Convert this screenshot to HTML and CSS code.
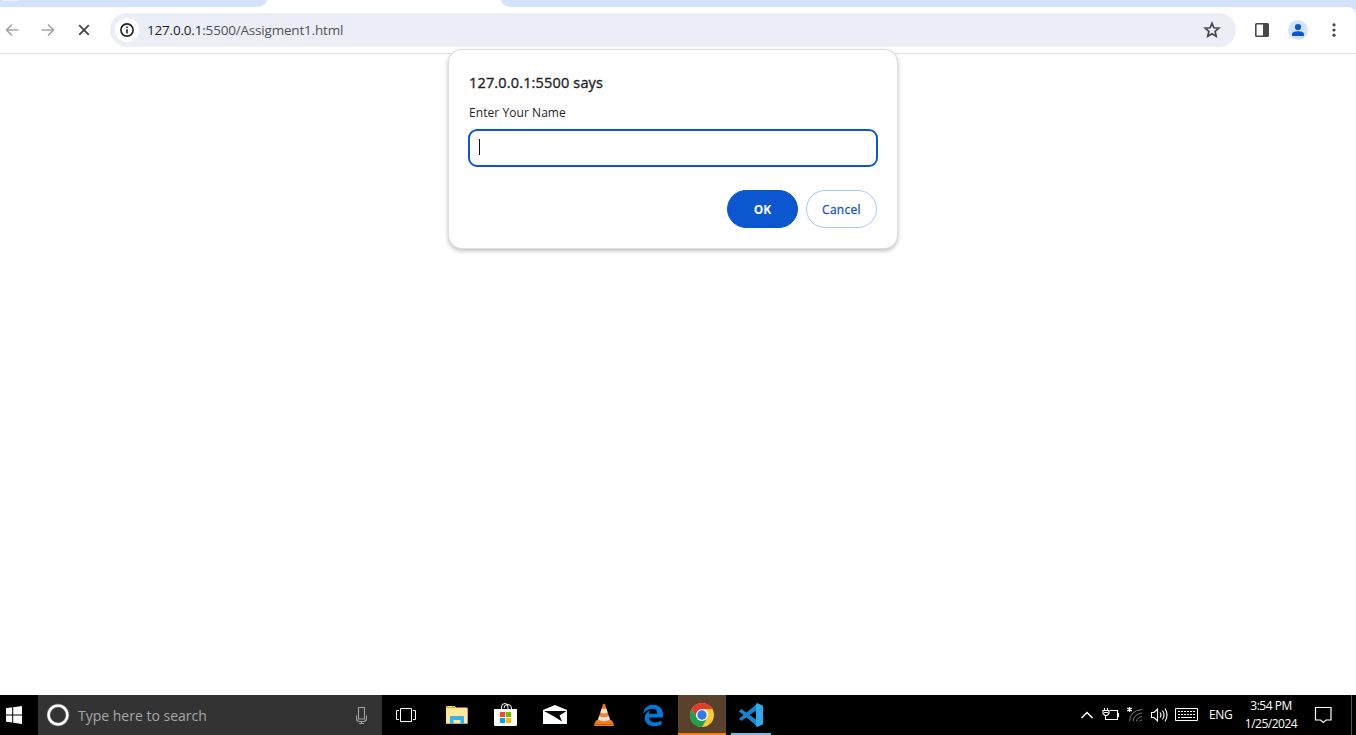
FILE: index.html
```
<!DOCTYPE html>
<html lang="en">
<head>
<meta charset="utf-8">
<title>127.0.0.1:5500</title>
<link rel="stylesheet" href="styles.css">
</head>
<body>
<div class="screen">
  <header class="browser">
    <div class="tabstrip"><div class="tab-left"><i class="hover-tab"></i></div><div class="tab-right"></div></div>
    <div class="toolbar">
      <nav class="nav">
        <svg width="36" height="34" viewBox="0 0 36 34" fill="none" stroke="#a6a6a6" stroke-width="1.7"><path d="M18.500 17H7M12 11.500L6.500 17L12 22.500"/></svg>
        <svg width="36" height="34" viewBox="0 0 36 34" fill="none" stroke="#a6a6a6" stroke-width="1.7"><path d="M5.500 17H17M12 11.500L17.500 17L12 22.500"/></svg>
        <svg width="38" height="34" viewBox="0 0 38 34" fill="none" stroke="#474747" stroke-width="1.9"><path d="M7.200 12.200L16.800 21.800M16.800 12.200L7.200 21.800"/></svg>
      </nav>
      <div class="omnibox">
        <span class="info"><svg width="24" height="24" viewBox="0 0 24 24"><circle cx="12" cy="12" r="6.100" fill="none" stroke="#1f1f1f" stroke-width="1.600"/><path d="M12 8.500V10M12 11.300V15.400" stroke="#1f1f1f" stroke-width="1.600"/></svg></span>
        <span class="url"><b>127.0.0.1</b>:5500/Assigment1.html</span>
        <svg class="star" width="18" height="18" viewBox="0 0 18 18"><path d="M9 2.300L10.900 6.800L15.800 7.200L12.100 10.400L13.200 15.200L9 12.700L4.800 15.200L5.900 10.400L2.200 7.200L7.100 6.800Z" fill="none" stroke="#474747" stroke-width="1.700"/></svg>
      </div>
      <div class="actions">
        <svg width="36" height="34" viewBox="0 0 36 34"><rect x="11.800" y="10.800" width="12.400" height="12.400" rx=".8" fill="#fff" stroke="#474747" stroke-width="1.600"/><path d="M19 10.500h5v13h-5z" fill="#474747"/></svg>
        <svg width="36" height="34" viewBox="0 0 36 34"><circle cx="18" cy="17" r="10" fill="#d3e3fd"/><circle cx="18" cy="14" r="3.100" fill="#0b57d0"/><path d="M12 23V21.300C12 18.900 15.500 18.300 18 18.300S24 18.900 24 21.300V23Z" fill="#0b57d0"/></svg>
        <svg width="36" height="34" viewBox="0 0 36 34" fill="#474747"><circle cx="18" cy="11.800" r="1.600"/><circle cx="18" cy="17" r="1.600"/><circle cx="18" cy="22.200" r="1.600"/></svg>
      </div>
    </div>
  </header>
  <main class="page"></main>

  <section class="dialog">
    <h1 class="dialog-title">127.0.0.1:5500 says</h1>
    <p class="dialog-label">Enter Your Name</p>
    <div class="field"><i class="caret"></i></div>
    <div class="buttons"><span class="btn primary">OK</span><span class="btn">Cancel</span></div>
  </section>

  <footer class="taskbar">
    <svg class="start" width="38" height="40" viewBox="0 0 38 40" fill="#fff"><path d="M6 13.200L12.200 12.300V19.400H6ZM13.200 12.200L22 11V19.400H13.200ZM6 20.500H12.200V27.600L6 26.700ZM13.200 20.500H22V29L13.200 27.700Z"/></svg>
    <div class="search">
      <svg width="40" height="40" viewBox="0 0 40 40"><circle cx="20" cy="20" r="9.400" fill="none" stroke="#808080" stroke-width="3.600"/><circle cx="20" cy="20" r="9.400" fill="none" stroke="#fff" stroke-width="2.400"/></svg>
      <span class="search-text">Type here to search</span>
      <svg width="40" height="40" viewBox="0 0 40 40" fill="none" stroke="#a0a0a0" stroke-width="1.100"><path d="M16.500 12.500h6v11.500h-6zM14.500 20.500V23.500Q14.500 26.500 17.500 26.500H21.500Q24.500 26.500 24.500 23.500V20.500M19.500 26.500V28.500M17 28.500H22"/></svg>
    </div>
    <svg class="taskview" width="48" height="40" viewBox="0 0 48 40" fill="none" stroke="#fff"><path d="M18.500 13.500h11v13h-11zM17 15.500h-2.500v9H17M31 15.500h2.500v9H31"/></svg>
    <div class="apps">
      <svg class="app" viewBox="0 0 48 40"><path d="M13 11H21L23 12.500H34.500V28.500H13Z" fill="#ffe08a"/><path d="M13 11h9v2h-9z" fill="#e8ad20"/><path d="M15 11h4v1h-4z" fill="#fff3a0"/><path d="M13 13.500h21.500v15H13z" fill="#ffe79c"/><path d="M17 29V22Q17 21 18 21H30Q31 21 31 22V29H27.500V25H20.500V29Z" fill="#38b4ea"/></svg>
      <svg class="app" viewBox="0 0 48 40"><path d="M19.500 14V12Q19.500 8.500 23 8.500Q26 8.500 26 12V14M22 13Q22 9.500 26 9.500Q29.500 9.500 29.500 13V14" fill="none" stroke="#fff"/><path d="M12 14H35V29.500Q35 31 33.500 31H13.500Q12 31 12 29.500Z" fill="#fff"/><path d="M18 17h5v5h-5z" fill="#f25022"/><path d="M24 17h5v5h-5z" fill="#7fba00"/><path d="M18 23h5v5h-5z" fill="#00a4ef"/><path d="M24 23h5v5h-5z" fill="#ffb900"/></svg>
      <svg class="app" viewBox="0 0 48 40"><path d="M12 15L24 10L36 15V29H12Z" fill="#fff"/><path d="M13 16H35.500L28.500 20.500L31 26.500L23 21.500Z" fill="#000"/></svg>
      <svg class="app" viewBox="0 0 48 40"><path d="M16.500 25H31.500L34 29.500Q34 31 32.500 31H15.500Q14 31 14 29.500Z" fill="#ed7d16"/><path d="M23 9.500Q24 8 25 9.500L30.500 26Q24 30 17.500 26Z" fill="#f58220"/><path d="M21.700 13.500Q24 15 26.300 13.500L27.600 17.500Q24 19.500 20.400 17.500ZM19.200 21Q24 23.500 28.800 21L30 24.500Q24 28 18 24.500Z" fill="#e0e3e5"/><path d="M15.500 29.500H32.500" stroke="#c75b08"/></svg>
      <svg class="app" viewBox="0 0 48 40"><path d="M14 19C14.800 13.200 18.700 9.800 24 9.800C30.500 9.800 34 14.300 34 19.500V22.500H20C20.200 26 23 27.400 26.200 27.400C28.800 27.400 31 26.600 32.500 25.600V29.600C30.500 30.700 28 31.200 25.300 31.200C19.500 31.200 15.700 27.700 15.700 23C15.700 19.200 17.900 16.600 21.300 15.400C20.400 16.400 20 17.500 19.900 18.800H28.300C28.300 15.600 26.600 13.800 23.500 13.800C19.500 13.800 16 16 14 19Z" fill="#0078d7"/></svg>
      <div class="app chrome"><svg width="48" height="38" viewBox="0 0 48 38"><circle cx="24" cy="20" r="12" fill="#fcc934"/><path d="M24 20L18.800 23L13.600 14A12 12 0 0 1 34.400 14H24Z" fill="#e33b2e"/><path d="M13.600 14A12 12 0 0 0 24 32L29.200 23L24 20L18.800 23Z" fill="#1fa050"/><circle cx="24" cy="20" r="6" fill="#fff"/><circle cx="24" cy="20" r="4.700" fill="#3477e8"/></svg></div>
      <div class="app code"><svg width="48" height="38" viewBox="0 0 48 38"><path d="M12 16.200L14.300 13.900L31 26V32Z" fill="#1c86cf"/><path d="M12 23.800L14.300 26.100L31 14V8Z" fill="#1583cc"/><path d="M30 8L36 10.800V29.200L30 32L29 31V9Z" fill="#2da9ee"/></svg></div>
    </div>
    <div class="tray">
      <svg width="132" height="40" viewBox="0 0 132 40" fill="none" stroke="#fff">
        <path d="M5.500 23L11 17.500L16.500 23" stroke-width="1.500"/>
        <path d="M34 15.500H41.500V24.500H32M42.500 18v4M28.500 13V15M31.500 13V15M27 15.500h6v3L31 20.500h-2L27 18.500ZM29.500 20v4.500H32M28 17.500h4" stroke-width="1.100"/>
        <path d="M53.500 12V17M51.200 13L55.800 16M55.800 13L51.200 16" stroke-width="1.200"/>
        <g stroke="#777"><path d="M53.500 26.500Q54 15.500 66 14.500M57 26.500Q57.500 19 66 18M60.500 26.500Q61 22.500 66 21.500M63.500 26.500Q64 25 66 25"/></g>
        <path d="M75.500 17.500H78L81.500 14V26L78 22.500H75.500ZM84 17.500Q86 20 84 22.500M86.500 15.500Q89.500 20 86.500 24.500M89 13.500Q93 20 89 26.500" stroke-width="1.100"/>
        <path d="M99.500 13.500h22v12h-22z"/><path d="M102 16.500H119M102 19.500H119" stroke-dasharray="2 1"/><path d="M102 22.500h2M105 22.500h11M117 22.500h2"/>
      </svg>
      <span class="lang">ENG</span>
      <div class="clock"><span class="time">3:54 PM</span><span class="date">1/25/2024</span></div>
      <svg width="50" height="40" viewBox="0 0 50 40" fill="none" stroke="#fff" stroke-width="1.200"><path d="M14.500 12.500h15.500v12.500h-5L22.300 27.500L19.500 25h-5z"/></svg>
      <i class="peek"></i>
    </div>
  </footer>
</div>
</body>
</html>
```
FILE: styles.css
```
* { box-sizing: border-box; }
body { margin: 0; font-family: "Open Sans", "Noto Sans", sans-serif; color: #1f1f1f; background: #fff; }
svg { display: block; flex: none; }
.screen { width: 1356px; height: 735px; display: flex; flex-direction: column; position: relative; overflow: hidden; }

.browser { height: 54px; border-bottom: 1px solid #dfe1e3; flex: none; background: linear-gradient(#d3e3fd, #d3e3fd) right top / 12px 17px no-repeat; }
.tabstrip { height: 7px; display: flex; justify-content: space-between; }
.tab-left { width: 267px; background: #d3e3fd; border-bottom-right-radius: 12px 7px; }
.tab-right { width: 855px; background: #d3e3fd; border-bottom-left-radius: 12px 7px; }
.hover-tab { display: block; width: 16px; height: 1px; margin-left: 3px; background: #eaf1fd; }
.toolbar { height: 46px; padding-top: 6px; display: flex; background: #fff; border-top-right-radius: 8px; }
.nav { display: flex; width: 110px; }
.omnibox { width: 1126px; height: 34px; border-radius: 17px; background: #ebeef7; display: flex; align-items: center; padding: 0 15px 0 5px; }
.info { width: 24px; height: 24px; border-radius: 50%; background: #fff; }
.url { flex: 1; margin-left: 8px; font-size: 13.5px; letter-spacing: -.19px; line-height: 34px; color: #505357; white-space: nowrap; }
.url b { font-weight: 400; color: #1f1f1f; }
.actions { display: flex; margin-left: 8px; }
.page { flex: 1; }

.dialog { position: absolute; left: 449px; top: 50px; width: 448px; height: 198px; padding: 22px 20px 20px 19px; border-radius: 13px; background: #fff; box-shadow: 0 0 0 1px #dedede, 0 2px 4px 1px rgba(0,0,0,.25); }
.dialog-title { margin: 0 0 0 1px; font-size: 14.5px; line-height: 21px; font-weight: 400; -webkit-text-stroke: .35px #1f1f1f; letter-spacing: .16px; white-space: nowrap; }
.dialog-label { margin: 11px 0 8px 1px; font-size: 12px; line-height: 17px; letter-spacing: .06px; white-space: nowrap; }
.field { width: 410px; height: 38px; border: 2px solid #0b57d0; border-radius: 9px; padding: 8px 9px; }
.caret { display: block; width: 1px; height: 16px; background: #111; }
.buttons { display: flex; justify-content: flex-end; gap: 8px; margin-top: 23px; }
.btn { width: 71px; height: 38px; border-radius: 19px; border: 1px solid #a8c7fa; color: #1553c4; font-size: 12px; font-weight: 400; -webkit-text-stroke: .3px; letter-spacing: .3px; line-height: 37px; text-align: center; }
.primary { background: #0b57d0; border-color: #0b57d0; color: #fff; font-weight: 700; -webkit-text-stroke: 0; letter-spacing: 0; }

.taskbar { height: 40px; flex: none; display: flex; background: #000; color: #fff; }
.search { width: 344px; background: #333; display: flex; }
.search-text { flex: 1; font-size: 14px; line-height: 41px; letter-spacing: 0; color: #a6a6a6; white-space: nowrap; }
.apps { display: flex; gap: 1px; margin-left: 3px; }
.app { width: 48px; height: 40px; }
.chrome { background: #5a412c; border-bottom: 2px solid #ff7e08; }
.code { width: 40px; margin-left: 4px; display: flex; justify-content: center; border-bottom: 2px solid #76b9ed; }
.tray { display: flex; margin-left: auto; font-size: 12px; }
.lang { width: 33px; padding-left: 1px; line-height: 40px; font-size: 12px; letter-spacing: -.3px; }
.clock { width: 60px; padding-top: 2px; display: flex; flex-direction: column; align-items: center; line-height: 18px; font-size: 12px; white-space: nowrap; letter-spacing: -.5px; }
.peek { width: 5px; border-left: 1px solid #555; }
```
